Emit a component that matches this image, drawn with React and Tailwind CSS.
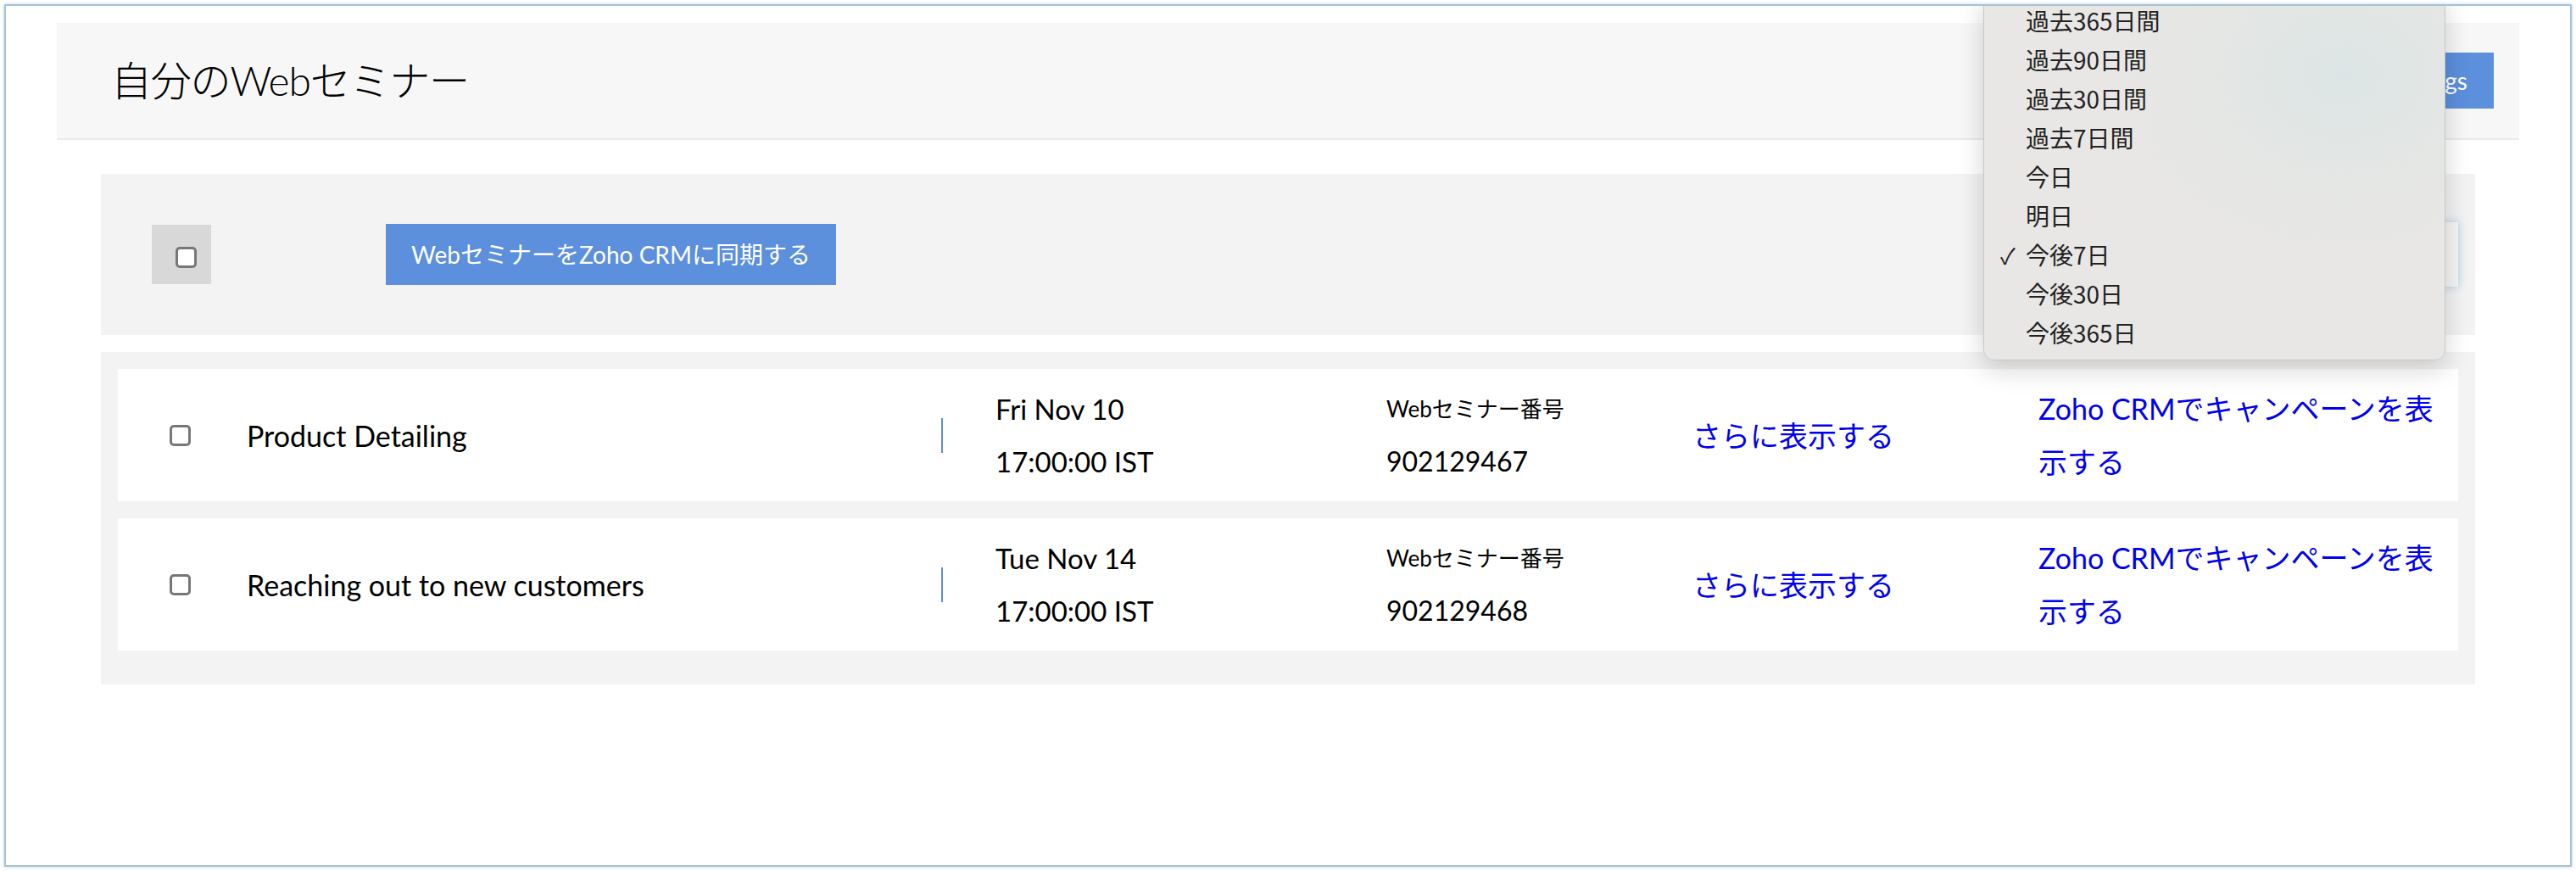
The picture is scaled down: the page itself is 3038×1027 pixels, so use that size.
const menuItems = ["過去365日間", "過去90日間", "過去30日間", "過去7日間", "今日", "明日", "今後7日", "今後30日", "今後365日"];

const webinars = [
  { name: "Product Detailing", day: "Fri Nov 10", time: "17:00:00 IST", id: "902129467" },
  { name: "Reaching out to new customers", day: "Tue Nov 14", time: "17:00:00 IST", id: "902129468" },
];

function Box() {
  return <div className="w-[25px] h-[25px] rounded-[5px] border-[3px] border-[#777777] bg-white" />;
}

export default function App() {
  return (
    <div className="min-h-screen bg-white pt-[5px] pl-[5px] font-['Lato','Noto_Sans_CJK_JP',sans-serif] text-black">
      <div className="relative w-[3028px] h-[1017px] border-2 border-[#a7c2d1] overflow-hidden shadow-[0_0_4px_rgba(150,185,205,0.6)]">
        {/* header */}
        <div className="ml-[60px] mt-[20px] w-[2904px] h-[138px] bg-[#f7f7f7] border-b-2 border-[#ebebeb] flex items-center justify-between pl-[64px] pr-[30px]">
          <h1 className="text-[48px] font-light tracking-tight">自分のWebセミナー</h1>
          <button className="h-[66px] px-[31px] bg-[#5c8fdc] text-white text-[28px]">Settings</button>
        </div>

        {/* toolbar */}
        <div className="ml-[112px] mt-[40px] w-[2800px] h-[190px] bg-[#f3f3f3] flex items-center pl-[60px] pr-[20px]">
          <div className="w-[70px] h-[70px] bg-[#d8d8d8] flex items-center justify-center pl-[10px] pt-[7px]">
            <Box />
          </div>
          <button className="ml-[206px] w-[531px] h-[72px] bg-[#5c8fdc] text-white text-[28px] flex items-center justify-center">
            WebセミナーをZoho CRMに同期する
          </button>
          <div className="ml-auto w-[479px] h-[76px] bg-[#f5f5f5] shadow-[0_0_10px_#a8d0e6]" />
        </div>

        {/* list */}
        <div className="ml-[112px] mt-[20px] w-[2800px] bg-[#f3f3f3] px-[20px] pt-[20px] pb-[40px] flex flex-col gap-[20px]">
          {webinars.map((w) => (
            <div key={w.id} className="h-[156px] bg-white flex items-center text-[33px]">
              <div className="w-[152px] pl-[61px]">
                <Box />
              </div>
              <div className="w-[819px] text-[34px]">{w.name}</div>
              <div className="w-[2px] h-[41px] bg-[#5b8fdc]" />
              <div className="ml-[62px] w-[461px] leading-[62px]">
                <div>{w.day}</div>
                <div>{w.time}</div>
              </div>
              <div className="w-[361px] leading-[62px]">
                <div className="text-[26px]">Webセミナー番号</div>
                <div className="text-[32px]">{w.id}</div>
              </div>
              <div className="w-[408px] text-[34px] text-[#0000ee]">さらに表示する</div>
              <div className="leading-[63px] text-[34px] text-[#0000ee]">
                <div>Zoho CRMでキャンペーンを表</div>
                <div>示する</div>
              </div>
            </div>
          ))}
        </div>

        {/* open select menu */}
        <div className="absolute left-[2332px] top-[-14px] w-[545px] pt-[7px] pb-[9px] rounded-[12px] border border-[#c9c9c9] bg-[radial-gradient(ellipse_at_78%_22%,#dce5e5_0%,#e3e6e4_22%,#e8e7e5_45%)] shadow-[0_10px_30px_rgba(0,0,0,0.18)] font-['Noto_Sans_CJK_JP',sans-serif] text-[28px] text-[#222222]">
          {menuItems.map((item) => (
            <div key={item} className="h-[46px] flex items-center">
              <span className="w-[49px] pl-[19px] text-[26px]">{item === "今後7日" ? "✓" : ""}</span>
              <span>{item}</span>
            </div>
          ))}
        </div>
      </div>
    </div>
  );
}
